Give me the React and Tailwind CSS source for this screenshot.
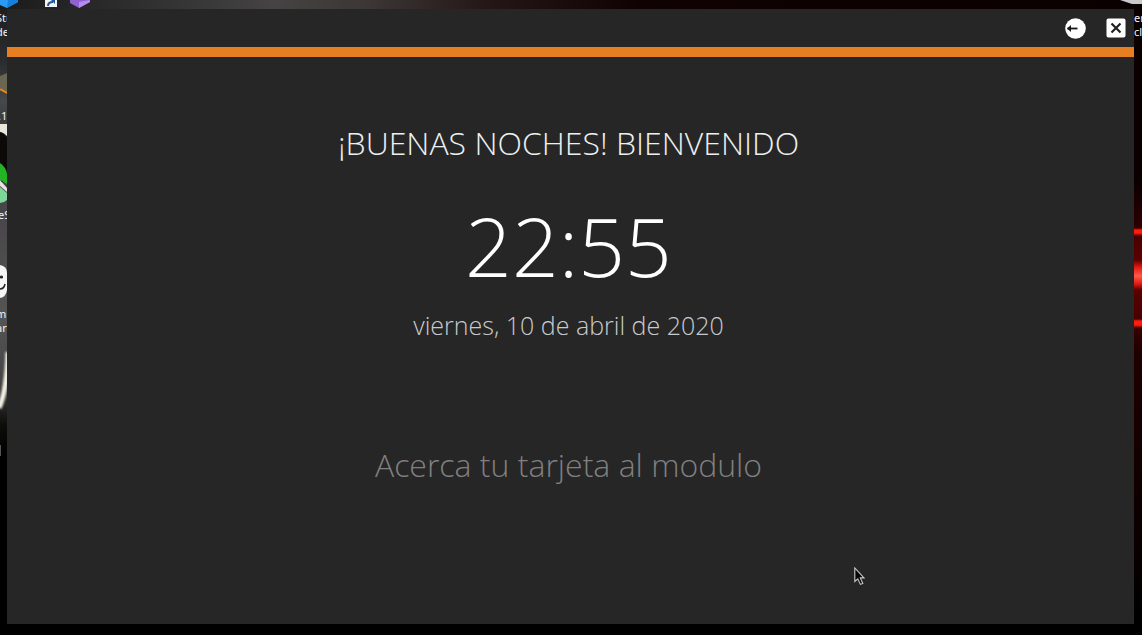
function LeftWallpaper() {
  return (
    <svg className="absolute left-0 top-0" width="7" height="635" viewBox="0 0 7 635" aria-hidden="true">
      <defs>
        <linearGradient id="leftBase" x1="0" y1="0" x2="0" y2="1">
          <stop offset="0" stopColor="#1c1c1c" />
          <stop offset="0.1" stopColor="#2c2d2e" />
          <stop offset="0.16" stopColor="#46484b" />
          <stop offset="0.19" stopColor="#3c3c3e" />
          <stop offset="0.36" stopColor="#4a484a" />
          <stop offset="0.5" stopColor="#555" />
          <stop offset="0.6" stopColor="#444" />
          <stop offset="0.67" stopColor="#0c0c0a" />
          <stop offset="0.72" stopColor="#000" />
        </linearGradient>
        <filter id="soft" x="-1" y="-0.1" width="3" height="1.2">
          <feGaussianBlur stdDeviation="1" />
        </filter>
      </defs>
      <rect width="7" height="635" fill="url(#leftBase)" />
      <path d="M0 76 Q5 74 7 73 V94 L0 88Z" fill="#6b6654" />
      <path d="M0 89 L7 93" stroke="#e08a14" strokeWidth="2" />
      <path d="M0 124 H7 V136 Q3 132 0 132Z" fill="#e9e7da" />
      <path d="M0 132 Q4 133 7 137 V182 H0Z" fill="#0d0907" />
      <path d="M0 163 Q6 167 7 174 V184 L0 180Z" fill="#22b422" />
      <path d="M0 180 L7 188 V192 L0 186Z" fill="#e8dfe0" />
      <path d="M0 187 L7 193 V200 Q4 203 0 203Z" fill="#7ed69a" />
      <path d="M0 265 Q7 266 7 273 V290 Q6 297 0 298Z" fill="#f4f4f4" />
      <circle cx="1.5" cy="277" r="1.6" fill="#222" />
      <path d="M0 289 Q4 289 5 284" stroke="#222" strokeWidth="1.5" fill="none" />
      <path d="M8 352 Q7 390 -1 408" stroke="#f4f1e6" strokeWidth="5" fill="none" filter="url(#soft)" />
      <rect y="445" width="1" height="11" fill="#555" />
    </svg>
  );
}

function TopWallpaper() {
  return (
    <div className="absolute inset-x-0 top-0 h-[9px] bg-[linear-gradient(90deg,#1b1b1b_0%,#2b2b2b_10%,#454343_24%,#3d3737_32%,#241616_43%,#100202_56%,#0a0000_100%)]">
      <svg className="absolute left-0 top-0" width="100" height="9" viewBox="0 0 100 9" aria-hidden="true">
        <path d="M0 0 H18 V2 L7 8 L0 5Z" fill="#2c9bf5" />
        <path d="M8 0 H18 V2 L7 8Z" fill="#1480e0" />
        <rect x="45" y="0" width="12" height="7" fill="#f1f4f8" />
        <path d="M48 6 Q48 2 53 2" stroke="#24579a" strokeWidth="2" fill="none" />
        <path d="M51 0 H55 V4Z" fill="#24579a" />
        <path d="M70 0 H90 V2 L79 8 L70 3Z" fill="#8f62cf" />
        <path d="M79 2 L90 0 V2 L79 8Z" fill="#b48cf0" />
      </svg>
      <svg className="absolute right-0 top-0" width="24" height="9" viewBox="0 0 24 9" aria-hidden="true">
        <path d="M2 0 H24 V4 L14 4Z" fill="#c9c9c9" />
      </svg>
    </div>
  );
}

function RightWallpaper() {
  return (
    <div className="absolute right-0 top-0 h-full w-2 bg-[linear-gradient(180deg,#0a0000_0px,#0a0000_180px,#2a0000_222px,#300000_228px,#ff1c0c_230px,#ff1c0c_233px,#4a0000_236px,#5a0000_260px,#e01810_267px,#ff5a48_276px,#e01810_284px,#5a0000_290px,#480000_319px,#ff1c0c_321px,#ff1c0c_325px,#3a0000_328px,#200000_350px,#160000_440px,#080000_560px,#000_620px)]" />
  );
}

const desktopText = "absolute font-['Noto_Sans',sans-serif] text-[11px] leading-[14px] text-gray-100 whitespace-pre";

function Desktop() {
  return (
    <div className="absolute inset-0 overflow-hidden bg-black">
      <LeftWallpaper />
      <RightWallpaper />
      <TopWallpaper />
      <div className={`${desktopText} -left-1 top-[11px]`}>{"Stu\nde"}</div>
      <div className={`${desktopText} -left-0.5 top-[109px]`}>.1</div>
      <div className={`${desktopText} -left-0.5 top-[208px]`}>eS</div>
      <div className={`${desktopText} -left-1 top-[307px]`}>{"m\nar"}</div>
      <div className={`${desktopText} left-[calc(100%-8px)] top-[11px]`}>{"er\ncla"}</div>
    </div>
  );
}

function Pointer() {
  return (
    <svg className="absolute left-[75%] top-[567px] -ml-[3px]" width="12" height="19" viewBox="0 0 12 19" aria-hidden="true">
      <path d="M0.8 1 V14.5 L3.8 11.8 L6.4 17.4 L8.8 16.4 L6.3 10.9 H10Z" fill="#060606" stroke="#c9c9c9" strokeWidth="1.1" />
    </svg>
  );
}

export default function App() {
  return (
    <div className="relative flex min-h-screen flex-col bg-black pt-[9px] pr-2 pb-[11px] pl-[7px] font-['Open_Sans',sans-serif]">
      <Desktop />
      <div className="relative flex flex-1 flex-col bg-[#262626]">
        <header className="flex h-[38px] items-center justify-end gap-5 pr-2">
          <button type="button" aria-label="Volver" className="size-[21px]">
            <svg width="21" height="21" viewBox="0 0 21 21">
              <circle cx="10.5" cy="10.5" r="10.3" fill="#fff" />
              <path d="M2.5 10.5 H12.5" stroke="#161616" strokeWidth="1.8" />
              <path d="M6 7 L2 10.5 L6 14Z" fill="#161616" />
            </svg>
          </button>
          <button type="button" aria-label="Cerrar" className="size-5">
            <svg width="20" height="20" viewBox="0 0 20 20">
              <rect x="0.5" y="0.5" width="19" height="19" rx="2" fill="#fff" />
              <path d="M5.5 5.5 L14.5 14.5 M14.5 5.5 L5.5 14.5" stroke="#222" strokeWidth="2.2" />
            </svg>
          </button>
        </header>
        <div className="h-2.5 bg-[#e67e22]" />
        <main className="flex flex-1 flex-col items-center pt-16 pr-1 text-center font-light">
          <h1 className="text-[32px] leading-[44px] font-light text-[#ecf0f1]">¡BUENAS NOCHES! BIENVENIDO</h1>
          <time className="mt-5 text-[82px] leading-[120px] text-white">22:55</time>
          <p className="text-[25px] leading-10 text-[#c8cbcd]">viernes, 10 de abril de 2020</p>
          <p className="mt-24 text-[32px] leading-[48px] text-[#808080]">Acerca tu tarjeta al modulo</p>
        </main>
      </div>
      <Pointer />
    </div>
  );
}
